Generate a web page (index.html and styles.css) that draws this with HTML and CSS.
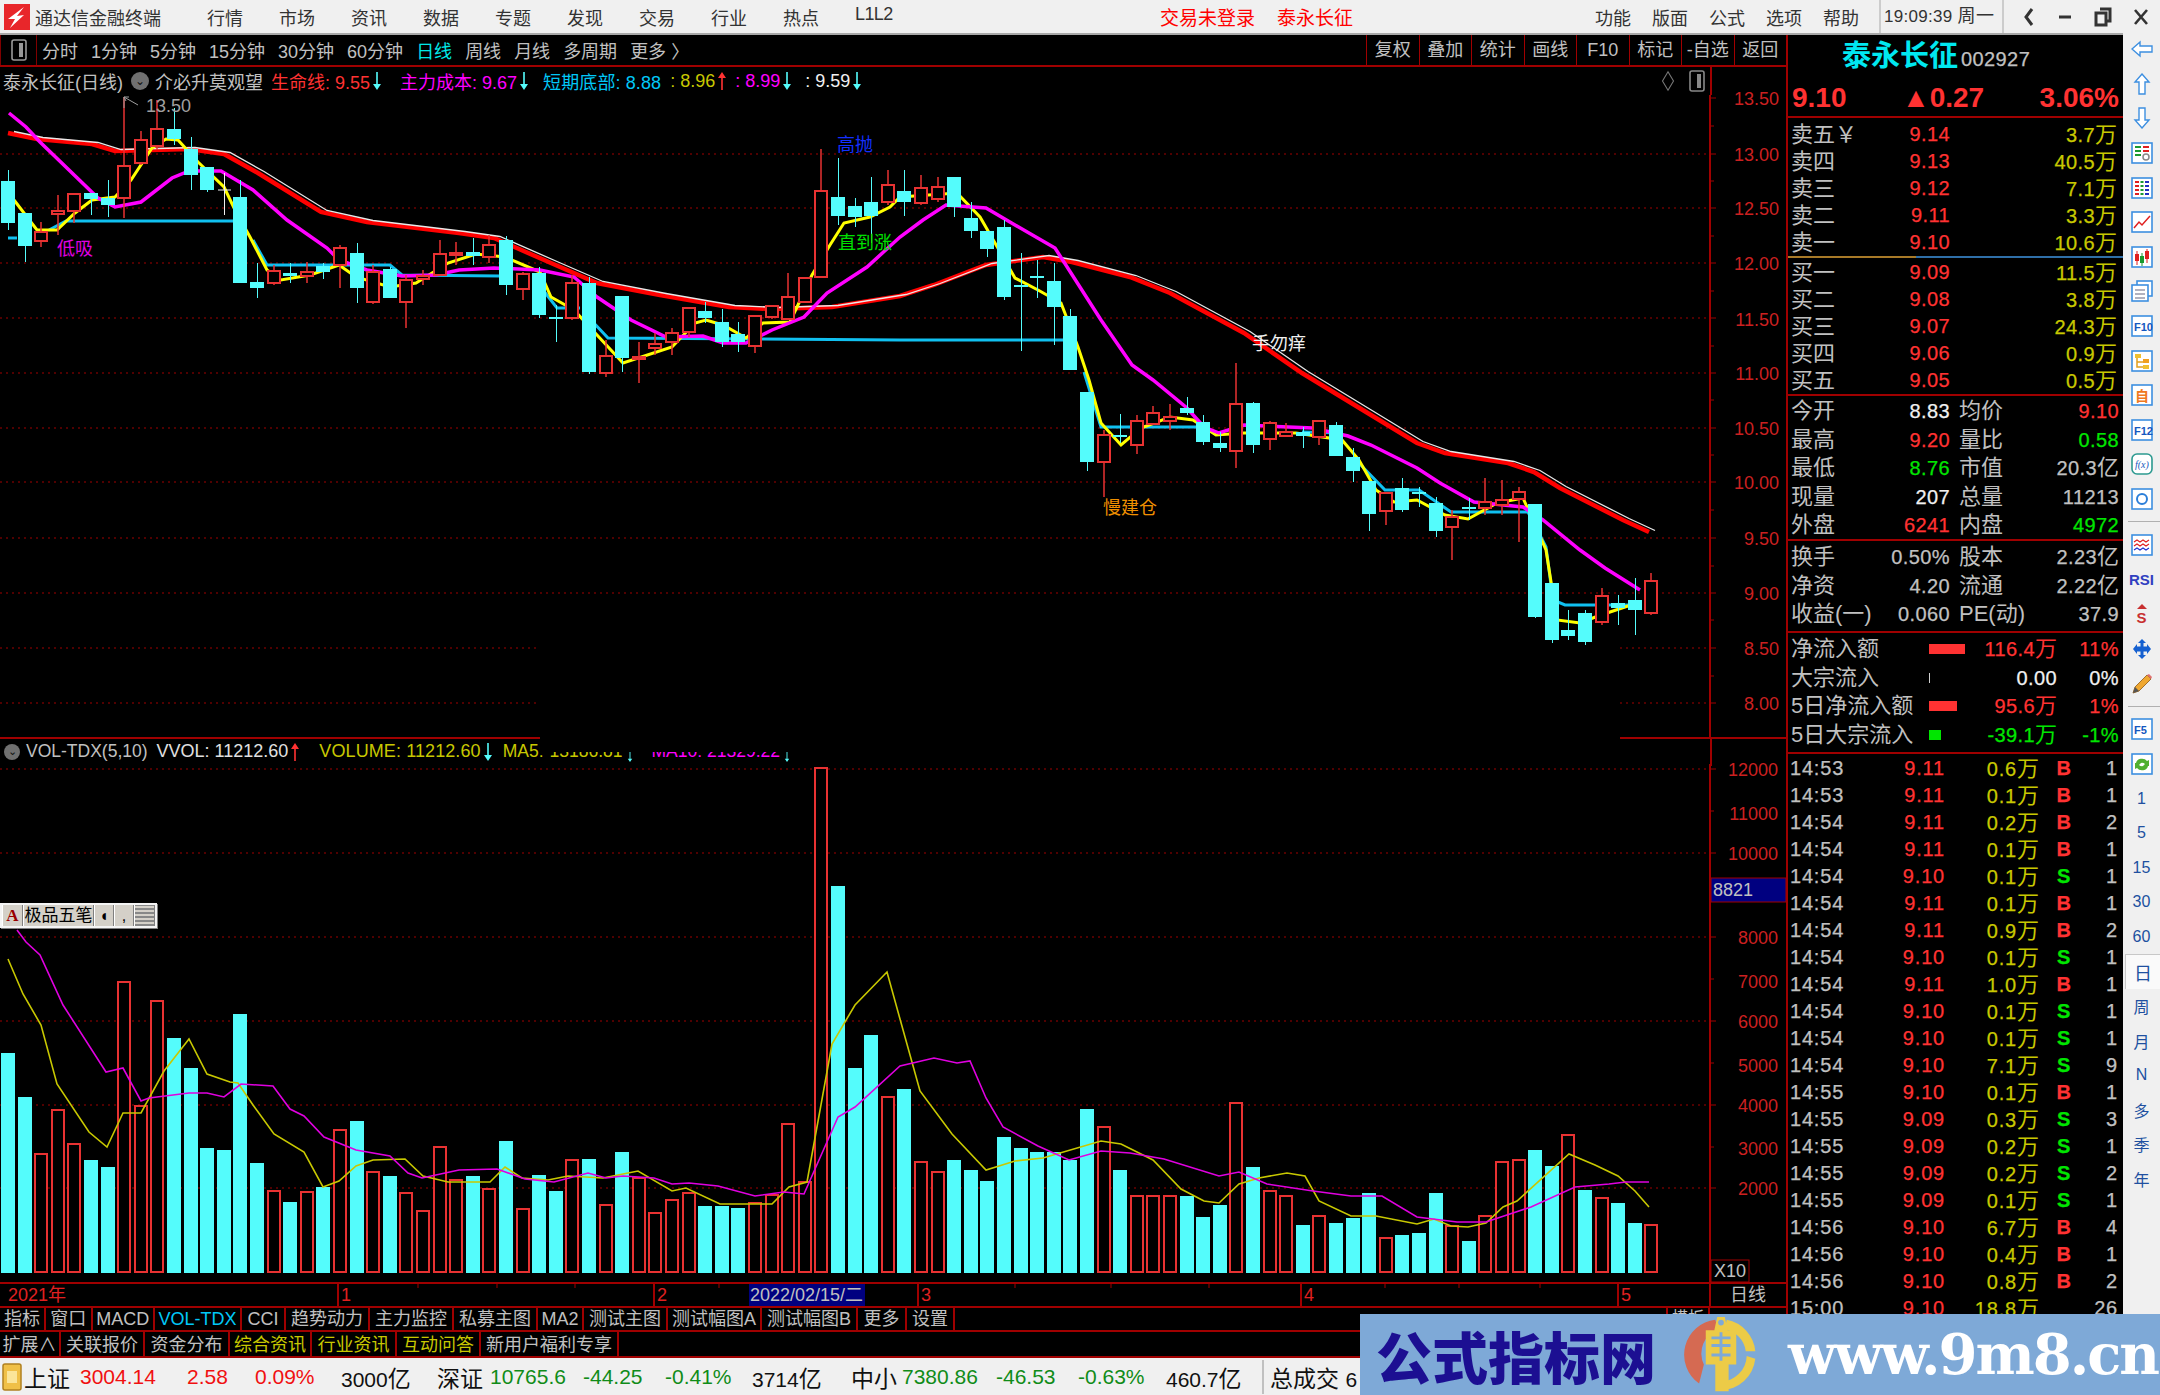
FILE: index.html
```html
<!DOCTYPE html>
<html lang="zh-CN">
<head>
<meta charset="utf-8">
<title>通达信金融终端</title>
<link rel="stylesheet" href="styles.css">
</head>
<body>
<svg class="defs" width="0" height="0"><defs>
<symbol id="dn" viewBox="0 0 8 18"><path d="M3.2 0h1.6v12H8l-4 6-4-6h3.2z"/></symbol>
<symbol id="up" viewBox="0 0 8 18"><path d="M3.2 18h1.6V6H8L4 0 0 6h3.2z"/></symbol>
</defs></svg>
<div class="app">
  <header class="title">
    <svg class="logo" viewBox="0 0 26 26"><rect width="26" height="26" fill="#e8262a"/><path d="M4 15 20 3 13 12l7-1L6 24l5-9z" fill="#fff"/></svg>
    <span class="app-name">通达信金融终端</span>
    <nav class="menu"><span>行情</span><span>市场</span><span>资讯</span><span>数据</span><span>专题</span><span>发现</span><span>交易</span><span>行业</span><span>热点</span><span class="l1">L1L2</span></nav>
    <div class="notice"><span>交易未登录</span><span>泰永长征</span></div>
    <nav class="menu2"><span>功能</span><span>版面</span><span>公式</span><span>选项</span><span>帮助</span></nav>
    <div class="clock">19:09:39 <span>周一</span></div>
    <div class="winctl">
      <svg viewBox="0 0 14 20"><path d="M10 2 4 10l6 8" fill="none" stroke="#333" stroke-width="3"/></svg>
      <svg viewBox="0 0 14 20"><path d="M1 10h12" stroke="#333" stroke-width="3"/></svg>
      <svg viewBox="0 0 18 20"><path d="M6 2h10v12h-3M2 6h10v12H2z" fill="none" stroke="#333" stroke-width="3"/></svg>
      <svg viewBox="0 0 14 20"><path d="M1 3l12 14M13 3 1 17" stroke="#333" stroke-width="2.6"/></svg>
    </div>
  </header>

  <main class="work">
    <section class="chart-col">
      <div class="toolbar">
        <div class="tb-btn"><svg viewBox="0 0 16 22"><rect x="1" y="1" width="14" height="20" rx="2" fill="none" stroke="#999" stroke-width="1.6"/><rect x="8" y="4" width="4" height="14" fill="#999"/></svg></div>
        <div class="tb-left"><span>分时</span><span>1分钟</span><span>5分钟</span><span>15分钟</span><span>30分钟</span><span>60分钟</span><span class="on">日线</span><span>周线</span><span>月线</span><span>多周期</span><span>更多 〉</span></div>
        <div class="tb-right"><span>复权</span><span>叠加</span><span>统计</span><span>画线</span><span>F10</span><span>标记</span><span>-自选</span><span>返回</span></div>
      </div>
      <div class="infobar">
        <span class="i-name">泰永长征(日线)</span>
        <i class="dot">⌄</i>
        <span class="i-sig">介必升莫观望</span>
        <span class="red i-a">生命线: 9.55</span><svg class="ar cy"><use href="#dn"/></svg>
        <span class="mag i-b">主力成本: 9.67</span><svg class="ar cy"><use href="#dn"/></svg>
        <span class="sky i-c">短期底部: 8.88</span>
        <span class="yel i-d">: 8.96</span><svg class="ar rd"><use href="#up"/></svg>
        <span class="mag i-d">: 8.99</span><svg class="ar cy"><use href="#dn"/></svg>
        <span class="wht i-e">: 9.59</span><svg class="ar cy"><use href="#dn"/></svg>
        <div class="i-tools">
          <svg viewBox="0 0 14 24" class="t-dia"><path d="M7 2 13 12 7 22 1 12z" fill="none" stroke="#777" stroke-width="1.2"/></svg>
          <svg viewBox="0 0 16 22" class="t-pan"><rect x="1" y="1" width="14" height="20" rx="2" fill="none" stroke="#888" stroke-width="1.6"/><rect x="8" y="4" width="4" height="14" fill="#888"/></svg>
        </div>
        <div class="i-axis"></div>
      </div>
      <svg class="main-svg" id="mainChart" viewBox="0 95 1786 642">
        <g id="mainGrid"></g><g id="mainLines"></g><g id="mainCandles"></g>
        <g class="marks">
          <path class="m-arrow" d="M124 108V97l14 8M124 97l5 0M124 97l2 4"/>
          <text class="m-gray" x="146" y="112">13.50</text>
          <text class="m-mag" x="57" y="255">低吸</text>
          <text class="m-blue" x="837" y="151">高抛</text>
          <text class="m-green" x="838" y="249">直到涨</text>
          <text class="m-white" x="1252" y="350">手勿痒</text>
          <text class="m-orange" x="1103" y="514">慢建仓</text>
        </g>
        <g class="axis">
          <path class="ax" d="M1710 95V737"/>
          <text x="1779" y="105">13.50</text><text x="1779" y="161">13.00</text><text x="1779" y="215">12.50</text><text x="1779" y="270">12.00</text><text x="1779" y="326">11.50</text><text x="1779" y="380">11.00</text><text x="1779" y="435">10.50</text><text x="1779" y="489">10.00</text><text x="1779" y="545">9.50</text><text x="1779" y="600">9.00</text><text x="1779" y="655">8.50</text><text x="1779" y="710">8.00</text>
          <path class="tk" d="M1710 98h6M1710 126h4M1710 154h6M1710 181h4M1710 208h6M1710 236h4M1710 263h6M1710 291h4M1710 318h6M1710 346h4M1710 373h6M1710 400h4M1710 428h6M1710 455h4M1710 482h6M1710 510h4M1710 538h6M1710 566h4M1710 593h6M1710 620h4M1710 648h6M1710 676h4M1710 703h6"/>
        </g>
      </svg>
      <div class="vol-head">
        <i class="dot dot-s">⌄</i>
        <span class="v-a">VOL-TDX(5,10)</span>
        <span class="v-b">VVOL: 11212.60</span><svg class="ar rd"><use href="#up"/></svg>
        <span class="yel v-c">VOLUME: 11212.60</span><svg class="ar cy"><use href="#dn"/></svg>
        <span class="yel v-d">MA5:</span><span class="yel v-e">13186.81</span><svg class="ar cy ar-s"><use href="#dn"/></svg>
        <span class="mag v-f">MA10: 21329.22</span><svg class="ar cy ar-s"><use href="#dn"/></svg>
        <div class="v-mask"></div>
        <div class="v-line"></div>
        <div class="v-axis"></div>
      </div>
      <div class="vol-wrap">
        <svg class="vol-svg" id="volChart" viewBox="0 764 1786 518">
          <g id="volGrid"></g><g id="volBars"></g><g id="volLines"></g>
          <g class="axis">
            <path class="ax" d="M1710 764V1282"/>
            <text x="1778" y="776">12000</text><text x="1778" y="820">11000</text><text x="1778" y="860">10000</text><text x="1778" y="944">8000</text><text x="1778" y="988">7000</text><text x="1778" y="1028">6000</text><text x="1778" y="1072">5000</text><text x="1778" y="1112">4000</text><text x="1778" y="1155">3000</text><text x="1778" y="1195">2000</text>
            <path class="tk" d="M1710 769h6M1710 811h4M1710 853h6M1710 937h6M1710 979h4M1710 1021h6M1710 1063h4M1710 1105h6M1710 1147h4M1710 1188h6"/>
            <rect class="val-box" x="1711" y="878" width="75" height="24"/>
            <text class="val-txt" x="1713" y="896">8821</text>
            <rect class="x-box" x="1711" y="1260" width="38" height="22"/>
            <text class="val-txt" x="1714" y="1277">X10</text>
          </g>
        </svg>
        <div class="ime">
          <span class="ime-a">A</span><span class="ime-n">极品五笔</span><span class="ime-b">◖</span><span class="ime-b">,</span>
          <span class="ime-k"></span>
        </div>
      </div>
      <svg class="time-svg" viewBox="0 0 1786 24">
        <rect class="date-box" x="749" width="116" height="24"/>
        <path class="ax" d="M0 1H1786M0 25H1786M338 0V24M654 0V24M918 0V24M1301 0V24M1618 0V24M1710 0V24"/>
        <path class="tk" d="M418 2v4M497 2v4M575 2v4M719 2v4M1015 2v4M1111 2v4M1209 2v4M1385 2v4M1459 2v4M1540 2v4"/>
        <text class="t-red" x="8" y="19">2021年</text>
        <text class="t-red" x="341" y="19">1</text><text class="t-red" x="657" y="19">2</text><text class="t-red" x="921" y="19">3</text><text class="t-red" x="1304" y="19">4</text><text class="t-red" x="1621" y="19">5</text>
        <text class="t-date" x="750" y="19">2022/02/15/二</text>
        <text class="t-day" x="1730" y="19">日线</text>
      </svg>
      <div class="tabs tabs-1">
        <span>指标</span><span>窗口</span><span>MACD</span><span class="sky">VOL-TDX</span><span>CCI</span><span>趋势动力</span><span>主力监控</span><span>私募主图</span><span>MA2</span><span>测试主图</span><span>测试幅图A</span><span>测试幅图B</span><span>更多</span><span>设置</span>
        <b class="tab-end">模板</b>
      </div>
      <div class="tabs tabs-2">
        <span>扩展∧</span><span>关联报价</span><span>资金分布</span><span class="y2">综合资讯</span><span class="y2">行业资讯</span><span class="y2">互动问答</span><span>新用户福利专享</span>
      </div>
    </section>

    <aside class="quote">
      <div class="q-head">
        <div class="q-name"><span class="q-title">泰永长征</span><span class="q-code">002927</span></div>
        <div class="q-price"><span>9.10</span><span>▲0.27</span><span>3.06%</span></div>
      </div>
      <div class="book book-s">
        <div class="brow"><span>卖五￥</span><span class="red">9.14</span><span class="yel">3.7<i>万</i></span></div>
        <div class="brow"><span>卖四</span><span class="red">9.13</span><span class="yel">40.5<i>万</i></span></div>
        <div class="brow"><span>卖三</span><span class="red">9.12</span><span class="yel">7.1<i>万</i></span></div>
        <div class="brow"><span>卖二</span><span class="red">9.11</span><span class="yel">3.3<i>万</i></span></div>
        <div class="brow"><span>卖一</span><span class="red">9.10</span><span class="yel">10.6<i>万</i></span></div>
      </div>
      <div class="split"></div>
      <div class="book book-b">
        <div class="brow"><span>买一</span><span class="red">9.09</span><span class="yel">11.5<i>万</i></span></div>
        <div class="brow"><span>买二</span><span class="red">9.08</span><span class="yel">3.8<i>万</i></span></div>
        <div class="brow"><span>买三</span><span class="red">9.07</span><span class="yel">24.3<i>万</i></span></div>
        <div class="brow"><span>买四</span><span class="red">9.06</span><span class="yel">0.9<i>万</i></span></div>
        <div class="brow"><span>买五</span><span class="red">9.05</span><span class="yel">0.5<i>万</i></span></div>
      </div>
      <div class="stats s1">
        <div class="srow"><span>今开</span><span class="wht">8.83</span><span>均价</span><span class="red">9.10</span></div>
        <div class="srow"><span>最高</span><span class="red">9.20</span><span>量比</span><span class="grn">0.58</span></div>
        <div class="srow"><span>最低</span><span class="grn">8.76</span><span>市值</span><span>20.3<i>亿</i></span></div>
        <div class="srow"><span>现量</span><span class="wht">207</span><span>总量</span><span>11213</span></div>
        <div class="srow"><span>外盘</span><span class="red">6241</span><span>内盘</span><span class="grn">4972</span></div>
      </div>
      <div class="stats s2">
        <div class="srow"><span>换手</span><span>0.50%</span><span>股本</span><span>2.23<i>亿</i></span></div>
        <div class="srow"><span>净资</span><span>4.20</span><span>流通</span><span>2.22<i>亿</i></span></div>
        <div class="srow"><span class="narrow">收益(一)</span><span>0.060</span><span>PE(动)</span><span>37.9</span></div>
      </div>
      <div class="flows">
        <div class="frow"><span>净流入额</span><span><b class="bar bar-r w36"></b></span><span class="red">116.4<i>万</i></span><span class="red">11%</span></div>
        <div class="frow"><span>大宗流入</span><span><b class="bar bar-w"></b></span><span class="wht">0.00</span><span class="wht">0%</span></div>
        <div class="frow"><span>5日净流入额</span><span><b class="bar bar-r w28"></b></span><span class="red">95.6<i>万</i></span><span class="red">1%</span></div>
        <div class="frow"><span>5日大宗流入</span><span><b class="bar bar-g w12"></b></span><span class="grn">-39.1<i>万</i></span><span class="grn">-1%</span></div>
      </div>
      <div class="ticks">
        <div class="trow"><span>14:53</span><span class="red">9.11</span><span class="yel">0.6<i>万</i></span><span class="red">B</span><span>1</span></div>
        <div class="trow"><span>14:53</span><span class="red">9.11</span><span class="yel">0.1<i>万</i></span><span class="red">B</span><span>1</span></div>
        <div class="trow"><span>14:54</span><span class="red">9.11</span><span class="yel">0.2<i>万</i></span><span class="red">B</span><span>2</span></div>
        <div class="trow"><span>14:54</span><span class="red">9.11</span><span class="yel">0.1<i>万</i></span><span class="red">B</span><span>1</span></div>
        <div class="trow"><span>14:54</span><span class="red">9.10</span><span class="yel">0.1<i>万</i></span><span class="grn">S</span><span>1</span></div>
        <div class="trow"><span>14:54</span><span class="red">9.11</span><span class="yel">0.1<i>万</i></span><span class="red">B</span><span>1</span></div>
        <div class="trow"><span>14:54</span><span class="red">9.11</span><span class="yel">0.9<i>万</i></span><span class="red">B</span><span>2</span></div>
        <div class="trow"><span>14:54</span><span class="red">9.10</span><span class="yel">0.1<i>万</i></span><span class="grn">S</span><span>1</span></div>
        <div class="trow"><span>14:54</span><span class="red">9.11</span><span class="yel">1.0<i>万</i></span><span class="red">B</span><span>1</span></div>
        <div class="trow"><span>14:54</span><span class="red">9.10</span><span class="yel">0.1<i>万</i></span><span class="grn">S</span><span>1</span></div>
        <div class="trow"><span>14:54</span><span class="red">9.10</span><span class="yel">0.1<i>万</i></span><span class="grn">S</span><span>1</span></div>
        <div class="trow"><span>14:54</span><span class="red">9.10</span><span class="yel">7.1<i>万</i></span><span class="grn">S</span><span>9</span></div>
        <div class="trow"><span>14:55</span><span class="red">9.10</span><span class="yel">0.1<i>万</i></span><span class="red">B</span><span>1</span></div>
        <div class="trow"><span>14:55</span><span class="red">9.09</span><span class="yel">0.3<i>万</i></span><span class="grn">S</span><span>3</span></div>
        <div class="trow"><span>14:55</span><span class="red">9.09</span><span class="yel">0.2<i>万</i></span><span class="grn">S</span><span>1</span></div>
        <div class="trow"><span>14:55</span><span class="red">9.09</span><span class="yel">0.2<i>万</i></span><span class="grn">S</span><span>2</span></div>
        <div class="trow"><span>14:55</span><span class="red">9.09</span><span class="yel">0.1<i>万</i></span><span class="grn">S</span><span>1</span></div>
        <div class="trow"><span>14:56</span><span class="red">9.10</span><span class="yel">6.7<i>万</i></span><span class="red">B</span><span>4</span></div>
        <div class="trow"><span>14:56</span><span class="red">9.10</span><span class="yel">0.4<i>万</i></span><span class="red">B</span><span>1</span></div>
        <div class="trow"><span>14:56</span><span class="red">9.10</span><span class="yel">0.8<i>万</i></span><span class="red">B</span><span>2</span></div>
        <div class="trow"><span>15:00</span><span class="red">9.10</span><span class="yel">18.8<i>万</i></span><span></span><span>26</span></div>
      </div>
    </aside>

    <aside class="side">
      <div class="si"><svg viewBox="0 0 22 22"><path class="ol" d="M1 11 9 4v4h12v6H9v4z"/></svg></div>
      <div class="si"><svg viewBox="0 0 22 22"><path class="ol" d="M11 1l7 8h-4v12H8V9H4z"/></svg></div>
      <div class="si"><svg viewBox="0 0 22 22"><path class="ol" d="M11 21l7-8h-4V1H8v12H4z"/></svg></div>
      <div class="si"><svg viewBox="0 0 22 22"><rect class="bx" x="1" y="1" width="20" height="20"/><path d="M4 5h6M4 9h6M4 13h6" stroke="#1a9a30" stroke-width="2"/><path d="M12 5h6M12 9h6" stroke="#e02020" stroke-width="2"/><circle cx="15" cy="15" r="3" fill="none" stroke="#888" stroke-width="1.5"/></svg></div>
      <div class="si"><svg viewBox="0 0 22 22"><rect class="bx" x="1" y="1" width="20" height="20"/><path d="M4 5h4M4 9h4M4 13h4M4 17h4" stroke="#e02020" stroke-width="2"/><path d="M9.500 5h3M9.500 9h3M9.500 13h3M9.500 17h3" stroke="#1a9a30" stroke-width="2"/><path d="M14 5h4M14 9h4M14 13h4M14 17h4" stroke="#2030c0" stroke-width="2"/></svg></div>
      <div class="si"><svg viewBox="0 0 22 22"><rect class="bx" x="1" y="1" width="20" height="20"/><path d="M3 17l5-6 3 3 8-9" fill="none" stroke="#e02020" stroke-width="1.5"/></svg></div>
      <div class="si"><svg viewBox="0 0 22 22"><rect class="bx" x="1" y="1" width="20" height="20"/><path d="M6 5v14M16 3v14" stroke="#e02020"/><rect x="4" y="8" width="4" height="7" fill="#e02020"/><rect x="14" y="5" width="4" height="8" fill="#e02020"/><path d="M11 7v13" stroke="#1a9a30"/><rect x="9" y="10" width="4" height="7" fill="#1a9a30"/></svg></div>
      <div class="si"><svg viewBox="0 0 22 22"><rect class="bx" x="6" y="1" width="15" height="15"/><rect class="bx" x="1" y="5" width="16" height="16"/><path d="M4 10h10M4 14h10M4 18h10" stroke="#99a" stroke-width="1.5"/></svg></div>
      <div class="si"><svg viewBox="0 0 22 22"><rect class="bx" x="1" y="1" width="20" height="20"/><text class="ft" x="3" y="16">F10</text></svg></div>
      <div class="si"><svg viewBox="0 0 22 22"><rect class="bx" x="1" y="1" width="20" height="20"/><path d="M6 7v10h6M6 12h6" fill="none" stroke="#e0a020" stroke-width="1.5"/><rect x="4" y="4" width="6" height="4" fill="#f0c030"/><rect x="12" y="9" width="6" height="4" fill="#f0a020"/><rect x="12" y="15" width="6" height="4" fill="#f0c030"/></svg></div>
      <div class="si"><svg viewBox="0 0 22 22"><rect class="bx" x="1" y="1" width="20" height="20"/><text class="fz" x="4" y="17">自</text></svg></div>
      <div class="si"><svg viewBox="0 0 22 22"><rect class="bx" x="1" y="1" width="20" height="20"/><text class="ft" x="3" y="16">F12</text></svg></div>
      <div class="si"><svg viewBox="0 0 22 22"><rect x="1" y="1" width="20" height="20" rx="5" fill="#fff" stroke="#2c9a90" stroke-width="1.6"/><text class="fx" x="4" y="15">f(x)</text></svg></div>
      <div class="si"><svg viewBox="0 0 22 22"><rect class="bx" x="1" y="1" width="20" height="20"/><circle cx="11" cy="11" r="5" fill="none" stroke="#2c7fd9" stroke-width="2"/></svg></div>
      <div class="sep"></div>
      <div class="si"><svg viewBox="0 0 22 22"><rect class="bx" x="1" y="1" width="20" height="20"/><path d="M3 8l3-2 3 2 3-2 3 2 3-2M3 12l3-2 3 2 3-2 3 2 3-2" fill="none" stroke="#e02020" stroke-width="1.2"/><path d="M3 16l3-2 3 2 3-2 3 2 3-2" fill="none" stroke="#2030d0" stroke-width="1.2"/></svg></div>
      <div class="si"><span class="rsi">RSI</span></div>
      <div class="si"><svg viewBox="0 0 22 22"><path d="M11 1l5 5H6z" fill="#c83030"/><text class="fs" x="5.500" y="20">S</text></svg></div>
      <div class="si"><svg viewBox="0 0 22 22"><path d="M11 1l4 4h-2.500v3.500H16V6l4 5-4 5v-2.500h-3.500V17H15l-4 4-4-4h2.500v-3.500H6V16l-4-5 4-5v2.500h3.500V5H7z" fill="#1560d0"/></svg></div>
      <div class="si"><svg viewBox="0 0 22 22"><path d="M2 21l2-6L16 3l4 4L8 19z" fill="#f0a830" stroke="#a07030"/><path d="M16 3l4 4 1-2-3-3z" fill="#e07070"/><path d="M2 21l2-6 4 4z" fill="#555"/></svg></div>
      <div class="sep"></div>
      <div class="si"><svg viewBox="0 0 22 22"><rect class="bx" x="1" y="1" width="20" height="20"/><text class="ft" x="3" y="16">F5</text></svg></div>
      <div class="si"><svg viewBox="0 0 22 22"><rect class="bx" x="1" y="1" width="20" height="20"/><path d="M5 10a6 5 0 0 1 11-2l2-1v6h-6l2-2a4 3 0 0 0-7 1zM17 13a6 5 0 0 1-11 2l-2 1v-6h6l-2 2a4 3 0 0 0 7-1z" fill="#50b030"/></svg></div>
      <div class="st">1</div><div class="st">5</div><div class="st">15</div><div class="st">30</div><div class="st">60</div>
      <div class="st st-on">日</div><div class="st">周</div><div class="st">月</div><div class="st">N</div><div class="st">多</div><div class="st">季</div><div class="st">年</div>
    </aside>
  </main>

  <footer class="status">
    <svg class="s-icon" viewBox="0 0 20 28"><rect x="1" y="1" width="18" height="26" rx="2" fill="#f0c048" stroke="#b08020" stroke-width="1.500"/><rect x="5" y="8" width="10" height="12" fill="#fbe59a"/></svg>
    <span class="cn">上证</span><span class="r">3004.14</span><span class="r">2.58</span><span class="r">0.09%</span><span>3000<i>亿</i></span>
    <span class="cn">深证</span><span class="g">10765.6</span><span class="g">-44.25</span><span class="g">-0.41%</span><span>3714<i>亿</i></span>
    <span class="cn">中小</span><span class="g">7380.86</span><span class="g">-46.53</span><span class="g">-0.63%</span><span>460.7<i>亿</i></span>
    <span class="cn tot">总成交 <em>6</em></span>
  </footer>

  <div class="mark">
    <span class="mark-cn">公式指标网</span>
    <svg class="mark-logo" viewBox="0 0 80 84">
      <path d="M17 72A37 37 0 0 1 34 5l3 10A27 27 0 0 0 22 52z" fill="#d56a52"/>
      <path d="M76 46A37 37 0 0 1 40 79V70a28 28 0 0 0 27-27zM46 5a37 37 0 0 1 30 33H66A27 27 0 0 0 44 15z" fill="#eccb47"/>
      <path d="M36 2h8l3 14h9v36H48v28H34V52H24V16h9z" fill="#eccb47"/>
      <path d="M30 24h20M30 32h20M30 42h20M40 18v30" stroke="#7ea9d7" stroke-width="3"/>
      <circle cx="40" cy="8" r="3" fill="#7ea9d7"/>
    </svg>
    <span class="mark-url">www.9m8.cn</span>
  </div>
</div>
<script src="chart.js"></script>
</body>
</html>
```

FILE: styles.css
```css
* { box-sizing: border-box; }
html, body { margin: 0; padding: 0; background: #000; }
.defs { position: absolute; }
.app {
  width: 2160px; height: 1395px; position: relative; overflow: hidden;
  display: flex; flex-direction: column; background: #000;
  font-family: "Liberation Sans", "Noto Sans CJK SC", sans-serif;
  font-size: 18px; color: #c0c0c0;
}
i, em { font-style: normal; }

/* title bar */
.title {
  height: 35px; flex: none; display: flex; align-items: center;
  background: #f0f0f0; border-bottom: 2px solid #a8a8a8; color: #333; padding-left: 4px;
}
.logo { width: 26px; height: 26px; flex: none; }
.app-name { margin-left: 5px; width: 172px; }
.menu { display: flex; gap: 36px; width: 700px; flex: none; }
.menu span { width: 36px; white-space: nowrap; }
.menu .l1 { letter-spacing: -.6px; }
.notice { display: flex; gap: 22px; color: #f00; width: 0; flex: none; margin-left: 253px; white-space: nowrap; font-size: 19px; }
.menu2 { display: flex; gap: 21px; margin-left: auto; }
.clock { margin-left: 20px; width: 125px; height: 33px; line-height: 33px; padding-left: 3px; border-left: 2px solid #ccc; border-right: 2px solid #ccc; white-space: nowrap; font-size: 17px; letter-spacing: .3px; }
.clock span { font-size: 18px; }
.winctl { display: flex; align-items: center; gap: 22px; width: 156px; padding-left: 18px; }
.winctl svg { height: 20px; width: 14px; flex: none; }
.winctl svg:nth-child(3) { width: 18px; }

/* workspace */
.work { display: flex; height: 1323px; flex: none; }
.chart-col { width: 1788px; flex: none; display: flex; flex-direction: column; border-right: 2px solid #a00000; position: relative; }

.toolbar { height: 32px; flex: none; display: flex; align-items: center; border-bottom: 2px solid #a00000; }
.tb-btn { width: 37px; height: 30px; flex: none; display: flex; align-items: center; justify-content: center; border: 1px solid #800000; border-width: 0 1px 0 1px; }
.tb-btn svg { width: 16px; height: 22px; }
.tb-left { display: flex; gap: 13px; margin-left: 5px; white-space: nowrap; }
.tb-left .on { color: #00e8e8; }
.tb-right { margin-left: auto; display: grid; grid-template-columns: repeat(8, 52.5px); height: 30px; align-items: center; text-align: center; }
.tb-right span { border-left: 1px solid #a00000; height: 30px; line-height: 30px; }

.infobar { height: 28px; flex: none; display: flex; align-items: center; white-space: nowrap; padding-left: 3px; }
.dot { width: 18px; height: 18px; border-radius: 50%; background: #707070; color: #111; flex: none; display: flex; align-items: center; justify-content: center; font-size: 12px; line-height: 1; }
.infobar .dot { margin-left: 8px; }
.i-sig { margin-left: 6px; }
.i-a { margin-left: 8px; }
.i-b { margin-left: 19px; }
.i-c { margin-left: 15px; letter-spacing: .1px; }
.i-d { margin-left: 9px; }
.i-e { margin-left: 14px; }
.ar { width: 8px; height: 18px; margin-left: 3px; flex: none; fill: currentColor; }
.ar-s { height: 10px; margin-top: 10px; }
.ar.cy { color: #54fcfc; }
.ar.rd { color: #ff3232; }
.i-tools { margin-left: auto; display: flex; align-items: center; gap: 14px; padding-right: 5px; }
.t-dia { width: 14px; height: 22px; }
.t-pan { width: 16px; height: 22px; }
.i-axis { width: 76px; height: 28px; border-left: 2px solid #a00000; flex: none; }

.red { color: #ff3232; }
.mag { color: #ff00ff; }
.sky { color: #00c8f8; }
.yel { color: #c8c800; }
.wht { color: #f0f0f0; }
.grn { color: #00e600; }

.main-svg { width: 1786px; height: 642px; flex: none; display: block; overflow: visible; }
.vol-svg { width: 1786px; height: 518px; display: block; overflow: visible; }
.grid { stroke: #a00000; stroke-width: 1; stroke-dasharray: 2 4; fill: none; }
.cb { fill: #54fcfc; }
.cw { stroke: #54fcfc; stroke-width: 1; }
.rb { fill: #000; stroke: #e83232; stroke-width: 2; }
.rw { stroke: #e83232; stroke-width: 1.5; }
.ww { stroke: #f0f0f0; stroke-width: 1; }
.l-red { fill: none; stroke: #ff0000; stroke-width: 4.500; }
.l-white { fill: none; stroke: #e8e8e8; stroke-width: 1.300; }
.l-mag { fill: none; stroke: #ff00ff; stroke-width: 3.500; }
.l-yel { fill: none; stroke: #ffff00; stroke-width: 3; }
.l-sky { fill: none; stroke: #10c0f0; stroke-width: 3; }
.v-yel { fill: none; stroke: #c8c800; stroke-width: 1.6; }
.v-mag { fill: none; stroke: #e000e0; stroke-width: 1.6; }

.marks text, .axis text, .time-svg text { font-size: 18px; }
.m-arrow { fill: none; stroke: #a0a0a0; stroke-width: 1; }
.m-gray { fill: #a0a0a0; }
.m-mag { fill: #e000e0; }
.m-blue { fill: #1430ff; }
.m-green { fill: #00e000; }
.m-white { fill: #f0f0f0; }
.m-orange { fill: #f09000; }
.axis text { fill: #cc2020; text-anchor: end; }
.ax { stroke: #a00000; stroke-width: 2; fill: none; }
.tk { stroke: #a00000; stroke-width: 1; fill: none; }
.axis .val-box { fill: #000080; stroke: #a00000; }
.axis .x-box { fill: #000; stroke: #a00000; }
.axis .val-txt { fill: #c0c0c0; text-anchor: start; }

.vol-head { height: 27px; flex: none; display: flex; align-items: center; white-space: nowrap; position: relative; padding: 0 0 0 4px; font-size: 17.500px; border-top: 2px solid transparent; }
.dot-s { width: 16px; height: 16px; font-size: 11px; }
.v-a { margin-left: 6px; }
.v-b { margin-left: 9px; color: #e0e0e0; font-size: 18px; }
.v-c { margin-left: 20px; font-size: 18px; letter-spacing: .1px; }
.v-d { margin-left: 11px; }
.v-e { margin-left: 6px; }
.v-f { margin-left: 18px; }
.v-mask { position: absolute; left: 540px; top: -2px; width: 1080px; height: 15px; background: #000; }
.v-line { position: absolute; left: 0; top: -2px; width: 540px; height: 2px; background: #a00000; }
.v-line::after { content: ""; position: absolute; left: 1620px; top: 0; width: 90px; height: 2px; background: #a00000; }
.v-axis { position: absolute; right: 0; left: 1710px; top: -2px; height: 29px; border-left: 2px solid #a00000; border-top: 2px solid #a00000; }

.vol-wrap { height: 518px; flex: none; position: relative; }
.ime { position: absolute; left: 0; top: 139px; width: 157px; height: 25px; background: #d4d0c8; border: 2px solid #f4f4f4; display: flex; align-items: center; color: #000; font-size: 17px; box-shadow: 1px 1px 0 #808080; }
.ime span { height: 21px; line-height: 21px; border-right: 1px solid #808080; border-left: 1px solid #fff; text-align: center; }
.ime-a { width: 21px; color: #900; font-family: "Liberation Serif", serif; font-weight: 700; }
.ime-n { width: 71px; white-space: nowrap; }
.ime-b { width: 20px; font-size: 16px; }
.ime-k { width: 21px; background: repeating-linear-gradient(0deg, #888 0 2px, #d4d0c8 2px 4px); }

.time-svg { width: 1786px; height: 24px; flex: none; display: block; overflow: visible; }
.date-box { fill: #000080; }
.t-red { fill: #e02020; }
.t-date { fill: #c0c0c0; }
.t-day { fill: #c0c0c0; }

.tabs { height: 26px; flex: none; display: grid; align-items: center; border-bottom: 2px solid #a00000; text-align: center; white-space: nowrap; position: relative; }
.tabs span { height: 24px; line-height: 27px; border-right: 2px solid #a00000; }
.tabs-1 { grid-template-columns: 46px 46.500px 62.500px 87px 44px 84px 84px 84px 46px 84px 94px 96px 49px 48px; }
.tabs-2 { grid-template-columns: 61px 84px 85px 82px 85px 84px 138px; }
.tab-end { position: absolute; left: 1666px; top: 0; width: 44px; height: 24px; border-left: 2px solid #a00000; border-right: 2px solid #a00000; font-weight: 400; line-height: 24px; font-size: 16px; }
.y2 { color: #c8c800; }

/* right quote panel */
.quote { width: 335px; flex: none; font-size: 20px; letter-spacing: .4px; white-space: nowrap; overflow: hidden; -webkit-text-stroke: .25px currentColor; }
.quote i { font-size: 22px; letter-spacing: 0; -webkit-text-stroke: 0; }
.q-head { height: 83px; border-bottom: 2px solid #a00000; }
.q-name { height: 40px; display: flex; align-items: flex-end; padding-left: 54px; }
.q-title { color: #00e8f0; font-size: 29px; font-weight: 700; letter-spacing: 0; line-height: 38px; -webkit-text-stroke: 0; }
.q-code { margin-left: 3px; font-size: 20px; line-height: 32px; }
.q-price { display: flex; justify-content: space-between; padding: 6px 4px 0 4px; color: #ff3232; font-size: 28px; font-weight: 700; line-height: 34px; letter-spacing: 0; -webkit-text-stroke: 0; }
.book { padding: 0 6px 0 3px; }
.book-s { padding-top: 3px; height: 138px; }
.book-b { padding-top: 1px; border-bottom: 2px solid #a00000; height: 138px; }
.brow { height: 27px; line-height: 27px; display: grid; grid-template-columns: 99px 60px 1fr; }
.brow span:first-child, .srow span:nth-child(odd), .frow span:first-child { font-size: 22px; letter-spacing: 0; -webkit-text-stroke: 0; }
.brow span:nth-child(2) { text-align: right; }
.brow span:nth-child(3) { text-align: right; }
.split { height: 2px; background: linear-gradient(90deg, #a87a28 0 128px, #2f6fa8 128px); }
.stats { padding: 0 4px 0 3px; border-bottom: 2px solid #a00000; }
.s1 { height: 145px; padding-top: 1px; }
.s2 { height: 92px; padding-top: 2px; }
.srow { height: 28.500px; line-height: 28.500px; display: grid; grid-template-columns: 60px 99px 89px 1fr; }
.srow span:nth-child(2), .srow span:nth-child(4) { text-align: right; font-size: 20px; letter-spacing: .4px; }
.srow span:nth-child(3) { padding-left: 9px; }
.srow .narrow { letter-spacing: -1.200px; }
.flows { padding: 2px 4px 0 3px; height: 121px; border-bottom: 2px solid #a00000; }
.frow { height: 28.500px; line-height: 28.500px; display: grid; grid-template-columns: 138px 48px 80px 1fr; align-items: center; }
.frow span:nth-child(3), .frow span:nth-child(4) { text-align: right; }
.bar { display: block; height: 10px; }
.bar-r { background: #ff3232; }
.bar-g { background: #00e600; width: 12px; }
.bar-w { background: #d0d0d0; width: 1px; }
.w36 { width: 36px; }
.w28 { width: 28px; }
.w12 { width: 12px; }
.ticks { padding-left: 2px; padding-top: 1px; }
.trow { height: 27px; line-height: 27px; display: grid; grid-template-columns: 60px 95px 94px 50px 29px; letter-spacing: .8px; }
.trow i { letter-spacing: 0; }
.trow span:nth-child(2), .trow span:nth-child(3), .trow span:nth-child(5) { text-align: right; }
.trow span:nth-child(4) { text-align: center; font-weight: 700; }

/* right icon rail */
.side { width: 37px; flex: none; background: #f0f0f0; display: flex; flex-direction: column; margin-top: -3px; height: 1326px; position: relative; }
.si { height: 34.600px; flex: none; display: flex; align-items: center; justify-content: center; }
.si svg { width: 22px; height: 22px; }
.ol { fill: #fff; stroke: #3d8fe0; stroke-width: 1.4; }
.bx { fill: #fff; stroke: #3d8fe0; stroke-width: 1.6; }
.ft { font: 700 11px "Liberation Sans", sans-serif; fill: #1558c0; }
.fz { font: 700 14px "Noto Sans CJK SC", sans-serif; fill: #f07820; }
.fx { font: italic 10px "Liberation Serif", serif; fill: #1558c0; }
.fs { font: 700 15px "Liberation Sans", sans-serif; fill: #c83030; }
.rsi { font: 700 15px "Liberation Sans", sans-serif; color: #3040c0; }
.sep { height: 11.400px; flex: none; position: relative; }
.sep::after { content: ""; position: absolute; left: 5px; right: 0; top: 5px; height: 1px; background: #b0b0b0; }
.st { height: 34.600px; flex: none; display: flex; align-items: center; justify-content: center; color: #2050a0; font-size: 16px; }
.st-on { background: #fafafa; border: 2px solid #c8c8c8; border-width: 1px 0 0 1px; font-size: 18px; margin-left: 2px; }

/* status bar */
.status { height: 37px; flex: none; background: #f0f0f0; display: grid; align-items: center; color: #111; font-size: 21px; white-space: nowrap;
  grid-template-columns: 24px 56px 107px 68px 86px 96px 53px 93px 82px 87px 99px 51px 94px 82px 88px 96px auto; }
.status i { font-size: 23px; }
.s-icon { width: 20px; height: 28px; margin-left: 2px; }
.status .cn { font-size: 23px; }
.status .r { color: #f01010; }
.status .g { color: #108c18; }
.status .tot { border-left: 2px solid #c0c0c0; padding-left: 6px; margin-left: 0; }
.tot em { font-size: 21px; }

/* watermark */
.mark { position: absolute; left: 1360px; top: 1314px; width: 800px; height: 81px; background: #7ea9d7; display: flex; align-items: center; }
.mark-cn { margin-left: 16px; width: 303px; flex: none; font: 900 56px/81px "Noto Sans CJK SC", sans-serif; color: #1c0f92; letter-spacing: 0; white-space: nowrap; }
.mark-logo { width: 80px; height: 80px; flex: none; margin-left: 2px; }
.mark-url { margin-left: 27px; font: 700 56px/81px "DejaVu Serif", serif; color: #fff; white-space: nowrap; letter-spacing: -2px; }
```

FILE: chart.js
```js
// Candles: [kind, bodyTop, bodyBottom, wickTop, wickBottom]; kinds: c = falling, r = rising, w = white doji
var C = [
['c',181,223,170,230],['c',213,246,213,262],['r',232,241,222,247],['r',211,214,195,235],['r',194,211,193,223],
['c',193,199,193,215],['c',198,205,180,217],['r',166,198,97,218],['r',140,163,131,165],['r',129,146,100,150],
['c',129,139,108,145],['c',149,175,137,190],['c',167,190,167,192],['w',190,191,173,215],['c',197,283,180,283],
['c',282,288,263,298],['r',271,283,265,285],['c',273,276,263,283],['r',272,276,262,283],['c',266,272,263,279],
['r',248,265,245,288],['c',253,288,243,303],['r',272,302,265,304],['c',269,298,267,298],['r',280,302,275,328],
['r',276,279,270,285],['r',254,275,240,275],['r',253,255,242,265],['c',252,256,238,265],['r',245,257,235,263],
['c',240,285,236,295],['r',274,289,272,300],['c',273,315,267,318],['c',317,319,305,342],['r',283,318,275,320],
['c',283,372,277,374],['r',356,373,340,377],['c',296,358,296,372],['r',357,359,342,383],['r',344,348,333,355],
['r',333,342,328,355],['r',308,332,308,337],['c',311,318,302,323],['c',322,342,309,347],['c',334,342,322,352],
['r',316,346,316,353],['r',306,317,305,319],['r',297,319,273,320],['r',278,302,278,303],['r',191,277,149,277],
['c',197,216,158,225],['c',206,217,198,227],['c',202,216,177,243],['r',185,202,170,205],['c',191,202,170,216],
['r',188,203,175,205],['r',187,199,177,202],['c',177,207,177,217],['c',218,231,202,238],['c',231,249,231,257],
['c',227,297,220,300],['c',285,287,253,351],['c',276,278,260,298],['c',281,307,263,345],['c',316,370,309,370],
['c',392,462,392,471],['r',435,462,430,497],['c',435,437,414,443],['r',421,445,415,454],['r',413,424,406,425],
['r',417,421,404,430],['c',408,413,397,415],['c',422,442,415,445],['c',443,448,432,452],['r',404,451,363,468],
['c',403,445,402,453],['r',423,439,421,450],['r',432,436,423,437],['c',432,436,427,448],['r',421,437,421,445],
['c',425,456,422,456],['c',457,471,448,482],['c',481,514,481,531],['r',493,511,493,525],['c',488,510,478,512],
['c',492,494,487,507],['c',503,531,497,537],['r',517,527,510,560],['c',507,509,498,520],['r',502,508,478,515],
['r',500,505,480,515],['r',492,499,487,542],['c',504,617,504,618],['c',583,640,583,643],['c',630,636,610,640],
['c',613,642,610,645],['r',596,622,588,625],['c',603,608,595,625],['c',600,610,578,635],['r',581,613,573,615]
];
// Volume bars: kind letter then top y
var V = 'c1053 c1097 r1154 r1110 r1144 c1160 c1167 r982 r1106 r1001 c1038 c1068 c1148 c1150 c1014 c1163 r1191 c1202 r1192 c1187 r1130 c1121 r1172 c1176 r1193 r1211 r1147 r1180 c1176 r1189 c1141 r1209 c1175 c1191 r1160 c1159 r1205 c1152 r1178 r1213 r1200 r1193 c1206 c1206 c1208 r1203 r1195 r1124 r1182 r768 c886 c1068 c1035 r1097 c1089 r1162 r1172 c1160 c1170 c1181 c1137 c1148 c1152 c1152 c1160 c1109 r1127 c1170 r1196 r1196 r1196 c1196 c1217 c1205 r1103 c1167 r1191 r1196 c1225 r1216 c1223 c1218 c1193 r1238 c1235 c1233 c1193 r1226 c1241 r1216 r1162 r1160 c1150 c1166 r1135 c1190 r1198 c1203 c1223 r1225'.split(' ');

var L = {
 red:'8,133 37,139 92,144 115,151 189,149 224,154 258,173 321,212 367,222 459,233 494,238 551,263 597,283 660,295 729,307 772,309 832,307 900,296 934,285 986,265 1043,257 1072,262 1130,277 1170,293 1244,333 1302,373 1371,415 1417,443 1445,453 1508,463 1534,472 1560,488 1623,520 1649,532',
 mag:'9,113 26,127 40,142 69,170 98,198 115,207 141,202 172,178 189,171 221,171 253,190 287,220 327,248 339,260 367,270 402,276 436,275 459,270 494,268 540,270 574,277 597,297 631,320 666,337 703,336 723,343 746,343 772,330 804,317 827,293 867,267 900,237 923,220 946,205 986,208 1015,225 1055,248 1101,320 1132,365 1153,380 1187,408 1204,427 1219,433 1244,425 1313,428 1348,436 1371,445 1417,468 1440,483 1474,502 1523,507 1543,520 1580,550 1605,568 1640,590',
 yel:'14,200 37,230 57,230 75,213 92,200 115,197 131,180 152,148 166,139 178,140 198,162 224,187 235,210 250,237 267,270 281,280 310,275 339,265 356,277 390,287 416,283 448,263 476,254 505,257 540,272 551,297 574,310 597,335 623,363 672,347 695,323 706,320 723,325 746,338 763,323 790,322 812,275 830,245 844,223 870,217 890,207 900,197 957,193 980,217 995,243 1015,278 1038,290 1061,303 1078,347 1089,380 1101,423 1121,445 1141,428 1170,417 1193,420 1216,435 1244,433 1296,433 1342,440 1359,460 1376,490 1394,502 1417,500 1445,515 1468,519 1497,503 1523,498 1546,550 1557,620 1580,623 1598,616 1640,602',
 sky:['8,238 17,238','49,230 66,221 235,221','253,240 267,265 390,265 402,275 500,276','543,290 557,308 580,308','591,320 608,338 900,340 1072,340','1084,372 1101,427 1198,427','1302,432 1342,433','1353,457 1385,490 1419,490 1451,512 1528,512 1546,547 1553,600 1565,605 1640,605'],
 vy:'8,959 23,994 41,1025 57,1084 89,1132 107,1147 123,1113 141,1113 164,1071 189,1039 207,1074 230,1082 238,1083 253,1105 274,1134 304,1152 323,1187 339,1181 356,1166 373,1160 405,1159 423,1176 448,1182 490,1182 505,1167 522,1178 548,1180 568,1176 603,1178 623,1174 638,1171 672,1191 686,1188 720,1204 772,1204 789,1187 807,1182 832,1044 855,1005 887,972 900,1019 920,1091 952,1134 986,1170 1015,1161 1043,1158 1101,1141 1121,1144 1153,1160 1181,1189 1204,1201 1219,1203 1239,1184 1259,1178 1287,1173 1305,1176 1319,1201 1351,1216 1376,1216 1417,1224 1434,1219 1451,1226 1468,1227 1486,1223 1503,1207 1517,1201 1569,1154 1595,1165 1618,1176 1635,1191 1649,1207',
 vm:'17,930 26,942 40,955 63,1005 106,1072 123,1068 141,1101 149,1098 189,1093 207,1093 224,1097 241,1084 273,1086 290,1109 304,1116 324,1137 356,1150 390,1156 408,1173 422,1178 459,1170 497,1169 525,1179 554,1182 588,1173 606,1178 623,1176 654,1178 672,1184 689,1183 718,1186 755,1196 784,1192 804,1194 838,1117 855,1107 900,1066 934,1058 957,1063 970,1061 986,1098 1003,1127 1038,1146 1069,1160 1101,1151 1130,1153 1164,1159 1219,1176 1239,1172 1267,1184 1313,1191 1351,1196 1382,1196 1417,1217 1457,1222 1486,1222 1531,1207 1575,1187 1609,1184 1626,1182 1649,1182'
};

function cx(i) { return Math.round(8 + 16.6 * i); }
function poly(pts, cls, dx, dy) {
  return '<polyline class="' + cls + '" points="' + pts + '"' + (dx ? ' transform="translate(' + dx + ' ' + dy + ')"' : '') + '/>';
}
function seg(y, a, b) { return '<path class="grid" d="M' + a + ' ' + y + 'H' + b + '"/>'; }

var g = '';
[154,208,263,318,373,428,482,538,593].forEach(function (y) { g += seg(y, 0, 1710); });
[648,703].forEach(function (y) { g += seg(y, 0, 538) + seg(y, 1620, 1710); });
document.getElementById('mainGrid').innerHTML = g;

var l = poly(L.red, 'l-red') + poly(L.red, 'l-white', 6, -1.5);
L.sky.forEach(function (s) { l += poly(s, 'l-sky'); });
l += poly(L.yel, 'l-yel') + poly(L.mag, 'l-mag');
document.getElementById('mainLines').innerHTML = l;

var c = '';
C.forEach(function (d, i) {
  var x = cx(i), k = d[0], h = d[2] - d[1];
  if (k === 'r') {
    c += '<path class="rw" d="M' + x + ' ' + d[3] + 'V' + d[4] + '"/>';
    c += '<rect class="rb" x="' + (x - 6) + '" y="' + d[1] + '" width="12" height="' + h + '"/>';
  } else if (k === 'c') {
    c += '<path class="cw" d="M' + (x + .5) + ' ' + d[3] + 'V' + d[4] + '"/>';
    c += '<rect class="cb" x="' + (x - 7) + '" y="' + d[1] + '" width="14" height="' + h + '"/>';
  } else {
    c += '<path class="ww" d="M' + (x + .5) + ' ' + d[3] + 'V' + d[4] + 'M' + (x - 6) + ' ' + d[1] + 'h13"/>';
  }
});
document.getElementById('mainCandles').innerHTML = c;

var vg = '';
[769,853,937,1021,1105,1188].forEach(function (y) { vg += seg(y, 0, 1710); });
document.getElementById('volGrid').innerHTML = vg;

var b = '';
V.forEach(function (s, i) {
  var x = cx(i), top = +s.slice(1);
  if (s[0] === 'c') b += '<rect class="cb" x="' + (x - 7) + '" y="' + top + '" width="14" height="' + (1273 - top) + '"/>';
  else b += '<rect class="rb" x="' + (x - 6) + '" y="' + top + '" width="12" height="' + (1272 - top) + '"/>';
});
document.getElementById('volBars').innerHTML = b;
document.getElementById('volLines').innerHTML = poly(L.vy, 'v-yel') + poly(L.vm, 'v-mag');
```
